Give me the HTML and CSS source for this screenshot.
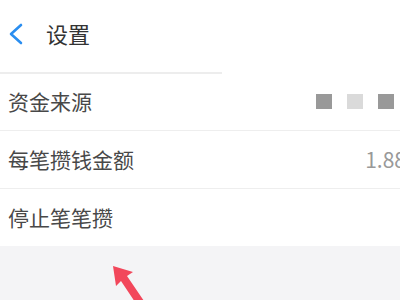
FILE: index.html
```html
<!DOCTYPE html>
<html lang="zh">
<head>
<meta charset="utf-8">
<link rel="stylesheet" href="styles.css">
</head>
<body>
<div class="page">
  <header class="nav">
    <svg class="back" width="16" height="22" viewBox="0 0 16 22"><path d="M13 2 L3 11 L13 20" fill="none" stroke="#2a8ef0" stroke-width="2.6" stroke-linecap="round" stroke-linejoin="round"/></svg>
    <span class="title">设置</span>
  </header>
  <div class="nav-line"></div>
  <div class="list">
    <div class="row">
      <span class="label">资金来源</span>
      <span class="squares"><i class="sq dark"></i><i class="sq light"></i><i class="sq dark"></i></span>
    </div>
    <div class="row">
      <span class="label">每笔攒钱金额</span>
      <span class="value">1.88</span>
    </div>
    <div class="row last">
      <span class="label">停止笔笔攒</span>
    </div>
  </div>
  <div class="fill"></div>
  <svg class="arrow" width="60" height="50" viewBox="0 0 60 50"><path d="M13 11 L33 17 L27 21 L44 46 L37 50 L21 26 L16 31 Z" fill="#f2475b"/></svg>
</div>
</body>
</html>
```
FILE: styles.css
```css
html, body {
  margin: 0;
  padding: 0;
}
body {
  width: 400px;
  height: 300px;
  overflow: hidden;
  background: #f4f4f6;
  font-family: "Noto Sans CJK SC", "Noto Sans", sans-serif;
}
.page {
  position: relative;
  width: 400px;
  height: 300px;
  overflow: hidden;
  display: flex;
  flex-direction: column;
}
.nav {
  height: 72px;
  background: #fff;
  display: flex;
  align-items: center;
  padding-left: 8px;
  box-sizing: border-box;
}
.back {
  display: block;
  margin-top: -4px;
}
.title {
  margin-left: 22px;
  margin-top: -6px;
  font-size: 22px;
  color: #333;
  line-height: 1;
}
.nav-line {
  height: 1px;
  background: #fff;
  position: relative;
}
.nav-line::before {
  content: "";
  display: block;
  width: 222px;
  height: 2px;
  background: #ededed;
}
.list {
  background: #fff;
}
.row {
  height: 58px;
  display: flex;
  align-items: center;
  padding-left: 8px;
  border-bottom: 1px solid #eeeeee;
  box-sizing: border-box;
  white-space: nowrap;
}
.row.last {
  height: 57px;
  border-bottom: none;
}
.label {
  font-size: 21px;
  color: #484848;
  line-height: 1;
}
.squares {
  margin-left: auto;
  margin-right: 6px;
  display: flex;
  gap: 15px;
}
.sq {
  display: block;
  width: 16px;
  height: 15px;
}
.sq.dark { background: #999; }
.sq.light { background: #dadada; }
.value {
  margin-left: auto;
  margin-right: -6px;
  font-size: 21px;
  color: #999;
  line-height: 1;
}
.fill {
  flex: 1;
  background: #f4f4f6;
}
.arrow {
  position: absolute;
  left: 100px;
  top: 255px;
}
```
